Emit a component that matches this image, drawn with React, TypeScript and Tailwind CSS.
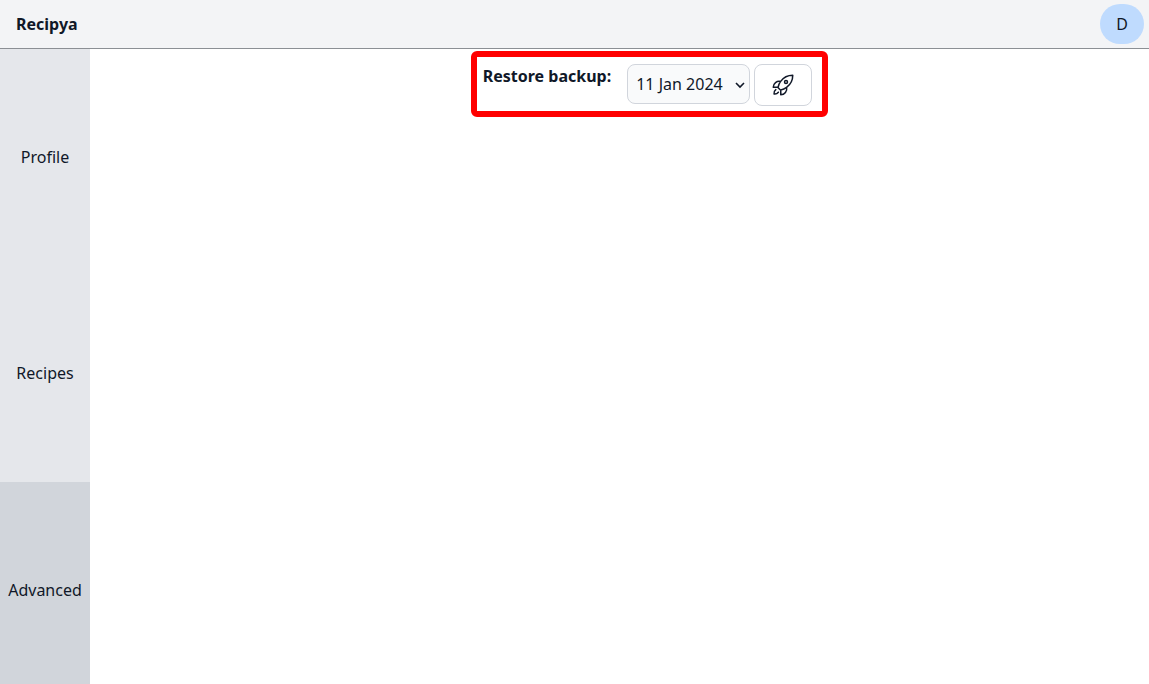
import { useState } from "react";

const tabs = ["Profile", "Recipes", "Advanced"];

function RocketIcon() {
  return (
    <svg
      aria-hidden="true"
      className="size-6"
      fill="none"
      viewBox="0 0 24 24"
      stroke="currentColor"
      strokeWidth="1.5"
      strokeLinecap="round"
      strokeLinejoin="round"
    >
      <path d="M15.59 14.37a6 6 0 0 1-5.84 7.38v-4.8m5.84-2.58a14.98 14.98 0 0 0 6.16-12.12A14.98 14.98 0 0 0 9.631 8.41m5.96 5.96a14.926 14.926 0 0 1-5.841 2.58m-.119-8.54a6 6 0 0 0-7.381 5.84h4.8m2.581-5.84a14.927 14.927 0 0 0-2.58 5.84m2.699 2.7c-.103.021-.207.041-.311.06a15.09 15.09 0 0 1-2.448-2.448 14.9 14.9 0 0 1 .06-.312m-2.24 2.39a4.493 4.493 0 0 0-1.757 4.306 4.493 4.493 0 0 0 4.306-1.758M16.5 9a1.5 1.5 0 1 1-3 0 1.5 1.5 0 0 1 3 0Z" />
    </svg>
  );
}

function ChevronIcon() {
  return (
    <svg
      aria-hidden="true"
      className="pointer-events-none absolute top-4 right-1 h-2.5 w-3"
      viewBox="0 0 12 10"
      fill="none"
      stroke="currentColor"
      strokeWidth="1.6"
    >
      <path d="M2 3l4 4 4-4" />
    </svg>
  );
}

export default function App() {
  const [active, setActive] = useState("Advanced");

  return (
    <div className="flex h-screen flex-col overflow-hidden bg-white font-['Noto_Sans',sans-serif] text-base text-gray-900">
      <header className="flex shrink-0 items-center justify-between border-b border-[#8b8f94] bg-gray-100 py-1 pr-[5px] pl-4">
        <a href="#" className="font-bold">
          Recipya
        </a>
        <button type="button" aria-label="Account menu" className="h-10 w-11 rounded-full bg-[#bfdbfe]">
          D
        </button>
      </header>

      <div className="flex flex-1 items-start">
        <nav className="grid h-[calc(100vh-35px)] w-[90px] shrink-0 grid-rows-3 bg-[#e5e7eb]">
          {tabs.map((tab) => (
            <button
              key={tab}
              type="button"
              onClick={() => setActive(tab)}
              className={active === tab ? "bg-[#d1d5db] px-2" : "px-2"}
            >
              {tab}
            </button>
          ))}
        </nav>

        <main className="flex flex-1 justify-center pt-0.5 pl-[60px]">
          <form
            className="flex items-start rounded-md border-6 border-[#ff0000] pt-[7px] pr-2.5 pb-[5px] pl-1.5"
            onSubmit={(event) => event.preventDefault()}
          >
            <label htmlFor="backup" className="mr-4 font-bold">
              Restore backup:
            </label>
            <div className="relative mr-1">
              <select
                id="backup"
                className="h-10 w-[123px] appearance-none rounded-lg border border-gray-300 bg-gray-50 px-2"
              >
                <option>11 Jan 2024</option>
              </select>
              <ChevronIcon />
            </div>
            <button
              type="submit"
              aria-label="Restore"
              className="flex h-[42px] w-[58px] items-center justify-center rounded-lg border border-gray-300"
            >
              <RocketIcon />
            </button>
          </form>
        </main>
      </div>
    </div>
  );
}
